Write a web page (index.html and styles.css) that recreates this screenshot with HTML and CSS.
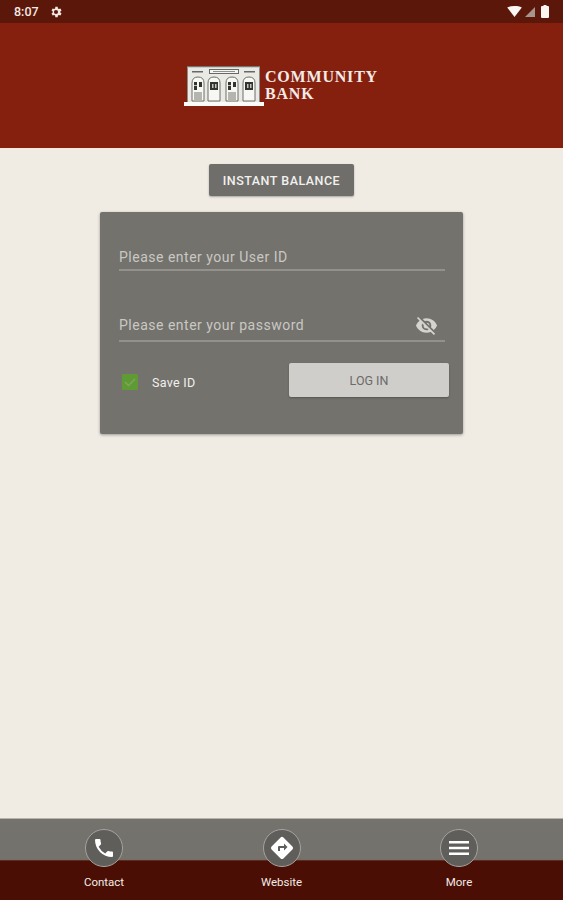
FILE: index.html
```html
<!DOCTYPE html>
<html lang="en">
<head>
    <meta charset="UTF-8">
    <meta name="viewport" content="width=device-width, initial-scale=1.0">
    <title>Community Bank</title>
    <link rel="stylesheet" href="styles.css">
</head>
<body>

    <div class="status-bar">
        <span class="time">8:07</span>
        <svg class="gear" viewBox="0 0 24 24"><path fill="#f3e9e4" fill-rule="evenodd" d="M19.400 13a7.500 7.500 0 0 0 0-2l2.100-1.600-2-3.500-2.500 1a7.500 7.500 0 0 0-1.700-1l-.4-2.700h-4l-.4 2.700a7.500 7.500 0 0 0-1.700 1l-2.500-1-2 3.500 2.100 1.600a7.500 7.500 0 0 0 0 2l-2.100 1.600 2 3.500 2.500-1a7.500 7.500 0 0 0 1.700 1l.4 2.700h4l.4-2.700a7.500 7.500 0 0 0 1.700-1l2.500 1 2-3.500zM12 15.500a3.500 3.500 0 1 1 0-7 3.500 3.500 0 0 1 0 7z"/></svg>
        <span class="status-right">
            <svg class="wifi" viewBox="0 0 16 12"><path fill="#fbf6f3" d="M0 1.500C4.500-.5 11.500-.5 16 1.500L8 12z"/></svg>
            <svg class="signal" viewBox="0 0 11 11"><path fill="#a8948c" d="M11 0v11H0z"/></svg>
            <svg class="battery" viewBox="0 0 8 13"><path fill="#fbf6f3" d="M2.500 0h3v1H7a1 1 0 0 1 1 1v10a1 1 0 0 1-1 1H1a1 1 0 0 1-1-1V2a1 1 0 0 1 1-1h1.500z"/></svg>
        </span>
    </div>

    <header>
        <div class="logo">
            <svg class="building" viewBox="0 0 80 42">
                <!-- facade -->
                <path fill="#e9e9e5" d="M3 1h73v36H3z"/>
                <path fill="#fbfbf8" d="M0 37h80v4H0z"/>
                <path fill="#77756f" d="M3 1h73v1.200H3zM3 2v35h.8V2zM75.200 2v35h.8V2z"/>
                <!-- sign band -->
                <path fill="#6a6864" d="M8 6h11v1.500H8zM25 4h30v5H25zM60 6h11v1.500H60z"/>
                <path fill="#f4f4f0" d="M26 5h28v3H26z"/>
                <path fill="#8f8e89" d="M29 6h22v1H29z"/>
                <!-- arches -->
                <g fill="#f7f7f3" stroke="#6f6d68" stroke-width="1">
                    <path d="M8 36V18q0-6 6-6t6 6v18z"/>
                    <path d="M24 36V18q0-6 6-6t6 6v18z"/>
                    <path d="M42 36V18q0-6 6-6t6 6v18z"/>
                    <path d="M59 36V18q0-6 6-6t6 6v18z"/>
                </g>
                <!-- windows and doors -->
                <path fill="#35332f" d="M10 17h3v8h-3zM15 17h3v5h-3zM26 17h8v8h-8zM44 17h3v8h-3zM49 17h3v5h-3zM61 17h8v8h-8z"/>
                <path fill="#c4c4bf" d="M28 19h1.500v4H28zM31 19h1.500v4H31zM63 19h1.500v4H63zM66 19h1.500v4H66zM10 20h3v1h-3zM44 20h3v1h-3z"/>
                <path fill="#b5b4af" d="M10 27h8v9h-8zM44 27h8v9h-8z"/>
            </svg>
            <div class="logo-name">COMMUNITY<br>BANK</div>
        </div>
    </header>

    <main>
        <button class="instant-btn">INSTANT BALANCE</button>

        <div class="login-card">
            <div class="field field-user">
                <span class="placeholder">Please enter your User ID</span>
            </div>
            <div class="field field-password">
                <span class="placeholder">Please enter your password</span>
                <svg class="eye" viewBox="0 0 24 24"><path fill="#d5d4cf" d="M12 7a5 5 0 0 1 5 5c0 .65-.13 1.260-.36 1.830l2.920 2.920A11.800 11.800 0 0 0 23 12c-1.730-4.390-6-7.500-11-7.500-1.400 0-2.740.25-3.980.7l2.160 2.160A4.900 4.900 0 0 1 12 7zM2 4.270l2.280 2.280.46.46A11.800 11.800 0 0 0 1 12c1.730 4.390 6 7.500 11 7.500 1.550 0 3.030-.3 4.380-.84l.42.42L19.730 22 21 20.730 3.270 3 2 4.270zM7.530 9.800l1.550 1.550A2.800 2.800 0 0 0 9 12a3 3 0 0 0 3 3c.22 0 .44-.03.650-.08l1.550 1.550A5 5 0 0 1 7 12c0-.79.2-1.530.53-2.200zm4.310-.78l3.150 3.150.02-.16a3 3 0 0 0-3-3l-.17.010z"/></svg>
            </div>
            <div class="login-row">
                <label class="save-id">
                    <span class="checkbox">
                        <svg viewBox="0 0 16 16"><path fill="none" stroke="#7da65c" stroke-width="1.500" d="M3 8l3.500 3.500L13 5"/></svg>
                    </span>
                    Save ID
                </label>
                <button class="login-btn">LOG IN</button>
            </div>
        </div>
    </main>

    <nav class="bottom-nav">
        <a class="nav-item">
            <span class="nav-circle">
                <svg viewBox="0 0 24 24"><path fill="#fff" d="M6.620 10.790a15.100 15.100 0 0 0 6.590 6.590l2.200-2.200a1 1 0 0 1 1.020-.24c1.120.37 2.330.57 3.570.57a1 1 0 0 1 1 1V20a1 1 0 0 1-1 1A17 17 0 0 1 3 4a1 1 0 0 1 1-1h3.500a1 1 0 0 1 1 1c0 1.250.2 2.450.57 3.570a1 1 0 0 1-.25 1.020z"/></svg>
            </span>
            <span class="nav-label">Contact</span>
        </a>
        <a class="nav-item">
            <span class="nav-circle">
                <svg viewBox="0 0 24 24"><path fill="#fff" d="M22.430 10.590l-9.010-9.010a2 2 0 0 0-2.830 0l-9 9a2 2 0 0 0 0 2.830l9 9a2 2 0 0 0 2.830 0l9.010-9a2 2 0 0 0 0-2.820zM14 14.500V12h-4v3H8v-4a1 1 0 0 1 1-1h5V7.500l3.500 3.500z"/></svg>
            </span>
            <span class="nav-label">Website</span>
        </a>
        <a class="nav-item">
            <span class="nav-circle">
                <svg viewBox="0 0 24 24"><path fill="#fff" d="M2 5h20v2.600H2zM2 10.700h20v2.600H2zM2 16.400h20V19H2z"/></svg>
            </span>
            <span class="nav-label">More</span>
        </a>
    </nav>

</body>
</html>
```

FILE: styles.css
```css
body {
    font-family: Roboto, 'Liberation Sans', sans-serif;
    margin: 0;
    height: 900px;
    display: flex;
    flex-direction: column;
    background-color: #f0ebe3;
    overflow: hidden;
}

/* status bar */
.status-bar {
    height: 23px;
    background-color: #5b170a;
    color: #f3e9e4;
    display: flex;
    align-items: center;
    padding: 0 14px;
    box-sizing: border-box;
    font-size: 12.500px;
    font-weight: 500;
}

.gear { width: 14px; height: 14px; margin-left: 10px; }
.status-right { margin-left: auto; display: flex; align-items: center; gap: 3px; }
.wifi { width: 15px; height: 11px; }
.signal { width: 10px; height: 10px; }
.battery { width: 8px; height: 13px; margin-left: 3px; }

header {
    height: 126px;
    background-color: #86200e;
    display: flex;
    align-items: center;
    justify-content: center;
    border-bottom: 1px solid #f7e6dc;
    box-sizing: border-box;
}

.logo {
    display: flex;
    align-items: center;
    gap: 1px;
}

.building { width: 80px; height: 42px; }

.logo-name {
    width: 114px;
    margin-top: -2px;
    font-family: 'Liberation Serif', serif;
    font-weight: bold;
    font-size: 16px;
    line-height: 17px;
    letter-spacing: 0.8px;
    color: #f3ebe6;
}

main {
    flex: 1;
    display: flex;
    flex-direction: column;
    align-items: center;
    padding-top: 15px;
}

.instant-btn {
    width: 145px;
    height: 32px;
    border: none;
    border-radius: 2px;
    background-color: #6f6e6a;
    color: #f2f1ee;
    font-family: inherit;
    font-size: 12.500px;
    font-weight: 500;
    letter-spacing: 0.5px;
    box-shadow: 0 1px 2px rgba(0,0,0,0.3);
}

.login-card {
    width: 363px;
    height: 222px;
    margin-top: 16px;
    padding: 0 18px 0 19px;
    box-sizing: border-box;
    background-color: #73726d;
    border-radius: 2px;
    box-shadow: 0 1px 3px rgba(0,0,0,0.35);
    display: flex;
    flex-direction: column;
}

.field {
    height: 30px;
    flex: none;
    border-bottom: 2px solid #92918c;
    display: flex;
    align-items: center;
    justify-content: space-between;
}

.field-user {
    height: 24px;
    margin-top: 27px;
    padding-top: 6px;
}

.field-password { margin-top: 39px; }

.placeholder {
    font-size: 14px;
    letter-spacing: 0.5px;
    color: #c9c8c3;
}

.eye { width: 23px; height: 23px; margin-right: 7px; }

.login-row {
    display: flex;
    align-items: center;
    justify-content: space-between;
    margin-top: 21px;
    margin-right: -4px;
}

.save-id {
    display: flex;
    align-items: center;
    margin-top: 4px;
    font-size: 12.500px;
    letter-spacing: 0.3px;
    color: #f1f0ed;
}

.checkbox {
    width: 16px;
    height: 16px;
    margin: 0 14px 0 3px;
    background-color: #5f9a34;
    border-radius: 1px;
    display: flex;
}

.login-btn {
    width: 160px;
    height: 34px;
    border: none;
    border-radius: 2px;
    background-color: #cfcecb;
    color: #6c6b68;
    font-family: inherit;
    font-size: 12.500px;
    box-shadow: 0 1px 2px rgba(0,0,0,0.25);
}

/* bottom menu */
.bottom-nav {
    height: 82px;
    display: flex;
    justify-content: space-between;
    padding: 10px 85px 0;
    box-sizing: border-box;
    background: linear-gradient(#73726d 0, #73726d 40px, #8c8a84 40px, #4a0e04 42px);
    border-top: 1px solid #b5b3ac;
}

.nav-item {
    width: 38px;
    display: flex;
    flex-direction: column;
    align-items: center;
    color: #f3ebe6;
}

.nav-circle {
    width: 38px;
    height: 38px;
    flex: none;
    box-sizing: border-box;
    border-radius: 50%;
    border: 1px solid #a5a39e;
    background-color: #5f5e5b;
    display: flex;
    align-items: center;
    justify-content: center;
}

.nav-circle svg { width: 24px; height: 24px; }

.nav-label {
    margin-top: 8px;
    font-size: 11.500px;
    white-space: nowrap;
}
```
